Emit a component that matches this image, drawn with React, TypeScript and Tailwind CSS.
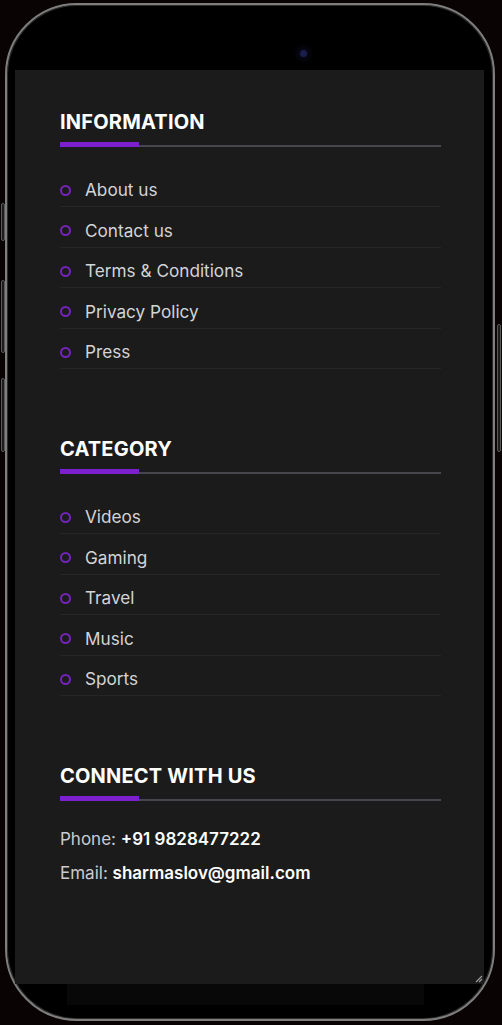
const information = ['About us', 'Contact us', 'Terms & Conditions', 'Privacy Policy', 'Press']
const categories = ['Videos', 'Gaming', 'Travel', 'Music', 'Sports']

function Heading({ title }: { title: string }) {
  return (
    <>
      <h2 className="text-[20px] font-bold leading-[28px] tracking-[0.2px] text-white">{title}</h2>
      <div className="mt-[6px] flex items-end">
        <span className="h-[5px] w-[79px] bg-[#7b1fcf]" />
        <span className="h-[2px] flex-1 bg-[#45474c]" />
      </div>
    </>
  )
}

function LinkList({ items }: { items: string[] }) {
  return (
    <ul className="mt-[19.5px]">
      {items.map((item) => (
        <li key={item} className="flex h-[40.5px] items-center border-b border-[#262626] pt-2">
          <span className="h-[11px] w-[11px] rounded-full border-2 border-[#7424bd]" />
          <a className="ml-[14px] text-[17.2px] text-[#d2d4d8]">{item}</a>
        </li>
      ))}
    </ul>
  )
}

export default function App() {
  return (
    <div className="relative min-h-[1025px] w-[502px] overflow-hidden bg-[#0a0303] font-['Inter','Noto_Sans',sans-serif]">
      {/* side buttons */}
      <span className="absolute left-[1px] top-[203px] h-[38px] w-[4px] rounded-sm border border-[#5a5a5a] bg-[#1c1c1c]" />
      <span className="absolute left-[1px] top-[280px] h-[73px] w-[4px] rounded-sm border border-[#5a5a5a] bg-[#1c1c1c]" />
      <span className="absolute left-[1px] top-[378px] h-[74px] w-[4px] rounded-sm border border-[#5a5a5a] bg-[#1c1c1c]" />
      <span className="absolute left-[497px] top-[324px] h-[128px] w-[4px] rounded-sm border border-[#5a5a5a] bg-[#1c1c1c]" />

      <div className="ml-[5px] mt-[3px] h-[1018px] w-[490px] rounded-[72px] border-2 border-[#7e7e7e] bg-black shadow-[inset_0_0_0_1px_#2c2c2c]">
        <div className="h-[65px] pl-[293px] pt-[45px]">
          <span className="block h-[7px] w-[7px] rounded-full bg-[#1a1d48] shadow-[0_0_6px_3px_#0b0b1e]" />
        </div>

        <div className="relative ml-[8px] h-[914px] w-[469px] bg-[#1b1b1b] pl-[45px] pr-[43px] pt-[38px]">
          <Heading title="INFORMATION" />
          <LinkList items={information} />

          <div className="mt-[66px]">
            <Heading title="CATEGORY" />
            <LinkList items={categories} />
          </div>

          <div className="mt-[66px]">
            <Heading title="CONNECT WITH US" />
            <div className="mt-[21px] text-[17px] leading-[34px]">
              <p className="text-[#c9cbcf]">
                Phone: <span className="font-semibold text-white">+91 9828477222</span>
              </p>
              <p className="text-[#c9cbcf]">
                Email: <span className="font-semibold text-white">sharmaslov@gmail.com</span>
              </p>
            </div>
          </div>

          <svg className="absolute bottom-[1px] right-[1px]" width="9" height="9" viewBox="0 0 9 9">
            <path d="M8 2 L2 8 M8 5 L5 8" stroke="#9a9a9a" strokeWidth="1.2" />
          </svg>
        </div>

        <div className="ml-[60px] h-[21px] w-[357px] bg-[#080808]" />
      </div>
    </div>
  )
}
